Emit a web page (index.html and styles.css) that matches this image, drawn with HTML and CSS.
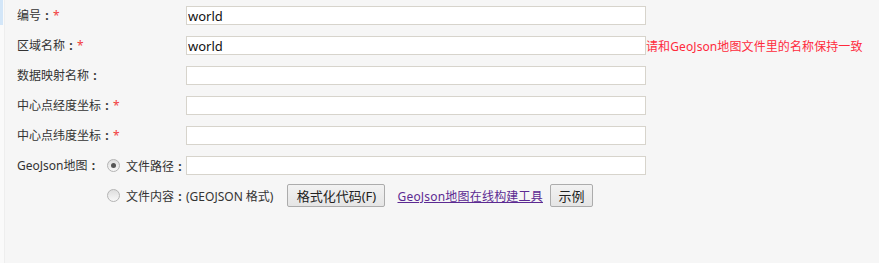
FILE: index.html
```html
<!DOCTYPE html>
<html lang="zh">
<head>
<meta charset="utf-8">
<title>地图</title>
<link rel="stylesheet" href="styles.css">
</head>
<body>
<div class="page">
  <div class="form">
    <div class="row">
      <span class="label">编号<span class="colon">:</span><em>*</em></span>
      <input class="field" type="text" value="world">
    </div>
    <div class="row">
      <span class="label">区域名称<span class="colon">:</span><em>*</em></span>
      <input class="field" type="text" value="world">
      <span class="hint">请和GeoJson地图文件里的名称保持一致</span>
    </div>
    <div class="row">
      <span class="label">数据映射名称<span class="colon">:</span></span>
      <input class="field" type="text">
    </div>
    <div class="row">
      <span class="label">中心点经度坐标<span class="colon">:</span><em>*</em></span>
      <input class="field" type="text">
    </div>
    <div class="row">
      <span class="label">中心点纬度坐标<span class="colon">:</span><em>*</em></span>
      <input class="field" type="text">
    </div>
    <div class="row">
      <span class="label label-geo">GeoJson地图<span class="colon">:</span></span>
      <span class="radio checked"></span>
      <span class="opt">文件路径<span class="colon">:</span></span>
      <input class="field" type="text">
    </div>
    <div class="row">
      <span class="label label-geo"></span>
      <span class="radio"></span>
      <span class="opt-text">文件内容<span class="colon">:</span>(GEOJSON 格式)</span>
      <button class="btn btn-format" type="button">格式化代码(F)</button>
      <a class="tool-link" href="#">GeoJson地图在线构建工具</a>
      <button class="btn btn-demo" type="button">示例</button>
    </div>
  </div>
</div>
</body>
</html>
```

FILE: styles.css
```css
html, body {
  margin: 0;
  padding: 0;
  height: 100%;
}
body {
  background: #fafafa;
  font-family: "Noto Sans", "Noto Sans CJK SC", sans-serif;
  font-size: 12px;
  color: #333;
}
.page {
  position: relative;
  min-height: 263px;
  margin-left: 4px;
  background: #f6f6f6;
  border-left: 1px solid #eeeeee;
  box-sizing: border-box;
}
.page::before {
  content: "";
  position: absolute;
  left: -5px;
  top: 0;
  width: 3px;
  height: 25px;
  background: #d3e6f8;
}
.form {
  padding-left: 12px;
}
.row {
  display: flex;
  align-items: center;
  height: 30px;
}
.label {
  width: 169px;
  flex: none;
  white-space: nowrap;
  line-height: 16px;
  padding-top: 2px;
}
.colon {
  display: inline-block;
  width: 12px;
  text-align: center;
  font-weight: bold;
}
.label em {
  font-style: normal;
  color: #f23c3c;
}
.label-geo {
  width: 90px;
}
.field {
  flex: none;
  width: 460px;
  height: 19px;
  margin: 1px 0 0;
  padding: 0 1px;
  box-sizing: border-box;
  border: 1px solid #d7d4cc;
  background: #fff;
  font-family: "Noto Sans", "Noto Sans CJK SC", sans-serif;
  font-size: 13px;
  color: #111;
  outline: none;
}
.hint {
  color: #ff2a3c;
  white-space: nowrap;
  margin-top: 2px;
  letter-spacing: 0.1px;
}
.radio {
  flex: none;
  position: relative;
  width: 13px;
  height: 13px;
  box-sizing: border-box;
  border-radius: 50%;
  border: 1px solid #b4b4b4;
  background: linear-gradient(#dedede, #f8f8f8);
  margin-right: 6px;
}
.radio.checked::after {
  content: "";
  position: absolute;
  left: 3px;
  top: 3px;
  width: 5px;
  height: 5px;
  border-radius: 50%;
  background: #555;
}
.opt {
  width: 60px;
  flex: none;
  white-space: nowrap;
  padding-top: 2px;
}
.opt-text {
  white-space: nowrap;
  margin-right: 14px;
  padding-top: 2px;
}
.btn {
  flex: none;
  height: 23px;
  padding: 0 6px;
  border: 1px solid #acacac;
  border-radius: 2px;
  background: linear-gradient(#f2f2f2, #e5e5e5);
  font-family: "Noto Sans", "Noto Sans CJK SC", sans-serif;
  font-size: 13px;
  color: #222;
  margin-top: 1px;
}
.btn-format {
  width: 98px;
}
.btn-demo {
  width: 43px;
}
.tool-link {
  margin: 0 7px 0 12px;
  padding-top: 2px;
  color: #5c2a92;
  text-decoration: underline;
  white-space: nowrap;
  letter-spacing: 0.2px;
}
```
